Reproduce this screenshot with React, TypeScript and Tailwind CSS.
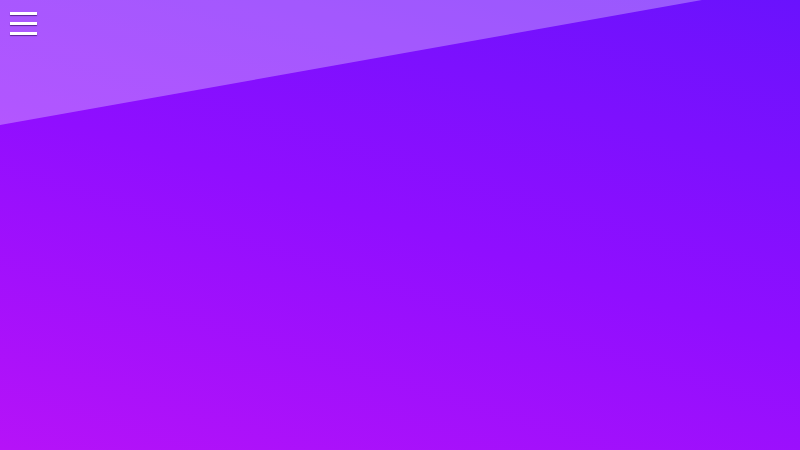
export default function App() {
  return (
    <div className="relative h-[450px] w-full overflow-hidden bg-[linear-gradient(17deg,#b612f8,#900eff_50%,#6a12fd)] font-['Liberation_Sans',sans-serif]">
      {/* light diagonal band over the top */}
      <div className="absolute inset-0 bg-white/30 [clip-path:polygon(0_0,702px_0,0_125px)]" />

      <header className="relative flex px-[10px] pt-[12px]">
        <button type="button" aria-label="Menu" className="flex w-[27px] flex-col gap-[7px]">
          <span className="block h-[3px] w-full bg-white shadow-[0_1px_1px_rgba(40,0,80,0.6)]" />
          <span className="block h-[3px] w-full bg-white shadow-[0_1px_1px_rgba(40,0,80,0.6)]" />
          <span className="block h-[3px] w-full bg-white shadow-[0_1px_1px_rgba(40,0,80,0.6)]" />
        </button>
      </header>
    </div>
  );
}
